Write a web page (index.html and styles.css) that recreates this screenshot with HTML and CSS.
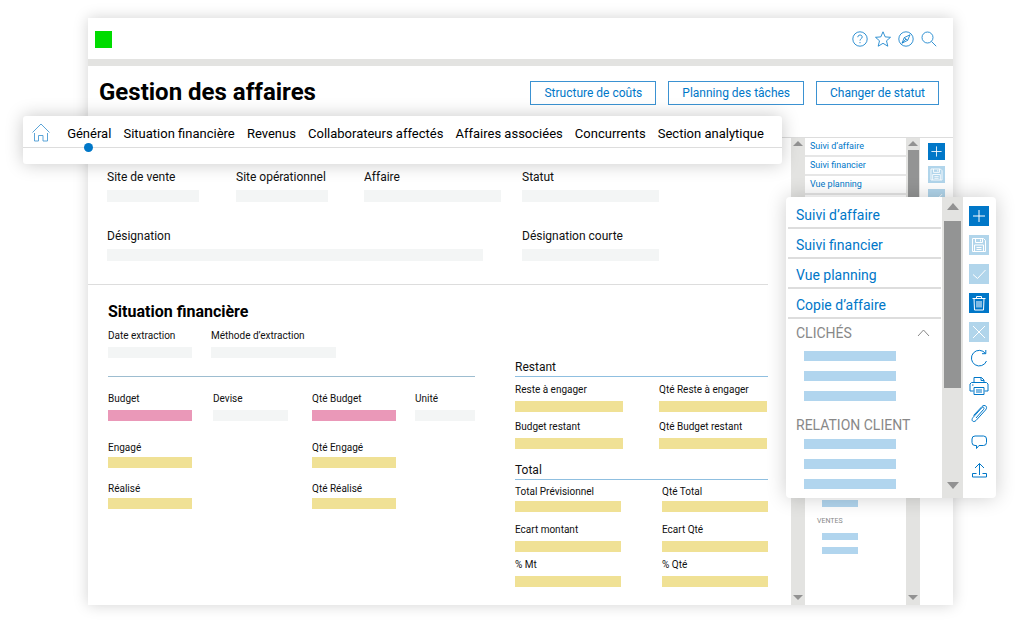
FILE: index.html
```html
<!DOCTYPE html>
<html lang="fr">
<head>
<meta charset="utf-8">
<title>Gestion des affaires</title>
<meta name="viewport" content="width=device-width, initial-scale=1">
<link rel="stylesheet" href="styles.css">
</head>
<body>
<svg class="defs" width="0" height="0" aria-hidden="true">
  <symbol id="i-plus" viewBox="0 0 20 20"><path d="M10 4v12M4 10h12"/></symbol>
  <symbol id="i-save" viewBox="0 0 20 20"><path d="M3.500 3.500h11l2 2v11h-13zM6.500 3.500v4h7v-4M11.500 4.500v2M5.500 16.500v-6.500h9v6.500M7.500 12.500h5M7.500 14.500h5"/></symbol>
  <symbol id="i-check" viewBox="0 0 20 20"><path d="M4 10.500l4.500 4L16.500 6"/></symbol>
  <symbol id="i-trash" viewBox="0 0 20 20"><path d="M3.500 5.500h13M7.500 5.500v-2h5v2M5 5.500l.5 11.500h9l.5-11.500M8 8v6.500M10 8v6.500M12 8v6.500"/></symbol>
  <symbol id="i-cross" viewBox="0 0 20 20"><path d="M4 4l12 12M16 4L4 16"/></symbol>
  <symbol id="i-refresh" viewBox="0 0 20 20"><path d="M16.500 5.500A7.800 7.800 0 1 0 17.500 13M16.800 2v3.700h-3.800"/></symbol>
  <symbol id="i-print" viewBox="0 0 20 20"><path d="M5 6.500v-5h7.500l2.500 2.500v2.500M12 1.500v3h3M4.500 15h-3.500v-7l1.500-1.500h15l1.500 1.500v7h-3.500M3 9h1.500M5 11.500h10v7h-10zM7 14h6M7 16h6"/></symbol>
  <symbol id="i-clip" viewBox="0 0 20 20"><path d="M7 14l7.500-8.500c1.500-2-.5-3-2-1.500L4 13.500c-2.500 3 .5 5.500 3 3l9.500-10.500c3-3.500-1-6-3.500-3.500L4.500 11.500"/></symbol>
  <symbol id="i-chat" viewBox="0 0 20 20"><path d="M6 4h8.500a3 3 0 0 1 3 3v3.500a3 3 0 0 1-3 3H10L7.500 16.500v-3H6a3 3 0 0 1-3-3V7a3 3 0 0 1 3-3z"/></symbol>
  <symbol id="i-up" viewBox="0 0 20 20"><path d="M10.500 15V3.500M6 8l4.500-4.500L15 8M7.500 13.500h-4v3.500h14v-3.500h-4"/></symbol>
</svg>

<div class="stage">
  <main class="window">
    <header class="topbar">
      <span class="logo"></span>
      <div class="tools">
        <button aria-label="Aide"><svg viewBox="0 0 16 16"><circle cx="8" cy="8" r="7.200"/><path d="M5.800 6.200c0-3 4.400-2.800 4.400-.2 0 1.800-2.200 1.600-2.200 3.600M8 11v1.200"/></svg></button>
        <button aria-label="Favoris"><svg viewBox="0 0 16 16"><path d="M8 .800l2.200 5.100 5.300.4-4 3.500 1.300 5.400L8 12.300l-4.800 2.900 1.300-5.400-4-3.500 5.300-.4z"/></svg></button>
        <button aria-label="Explorer"><svg viewBox="0 0 16 16"><circle cx="8" cy="8" r="7.200"/><path d="M12 3.800L9.700 9.300 4 12.200l2.200-5.500zM6.200 6.700l3.500 2.600M4 12.200l4-4.200"/></svg></button>
        <button aria-label="Rechercher"><svg viewBox="0 0 16 16"><circle cx="6.500" cy="6.500" r="5.500"/><path d="M10.500 10.500l4.700 4.700"/></svg></button>
      </div>
    </header>

    <div class="heading">
      <h1>Gestion des affaires</h1>
      <div class="actions">
        <button class="action">Structure de coûts</button>
        <button class="action">Planning des tâches</button>
        <button class="action">Changer de statut</button>
      </div>
    </div>

    <div class="body">
      <form class="content">
        <section class="general">
          <div class="row row-four">
            <div class="field"><label for="site-vente">Site de vente</label><input id="site-vente"></div>
            <div class="field"><label for="site-op">Site opérationnel</label><input id="site-op"></div>
            <div class="field wide"><label for="affaire">Affaire</label><input id="affaire"></div>
            <div class="field wide"><label for="statut">Statut</label><input id="statut"></div>
          </div>
          <div class="row row-two">
            <div class="field full"><label for="designation">Désignation</label><input id="designation"></div>
            <div class="field wide"><label for="designation-courte">Désignation courte</label><input id="designation-courte"></div>
          </div>
        </section>

        <section class="finance">
          <div class="left">
            <h2>Situation financière</h2>
            <div class="row extraction">
              <div class="field"><label for="date-ext">Date extraction</label><input id="date-ext"></div>
              <div class="field wide"><label for="methode">Méthode d’extraction</label><input id="methode"></div>
            </div>
            <div class="row amounts">
              <div class="field pink"><label for="budget">Budget</label><input id="budget"></div>
              <div class="field small"><label for="devise">Devise</label><input id="devise"></div>
              <div class="field pink"><label for="qte-budget">Qté Budget</label><input id="qte-budget"></div>
              <div class="field full"><label for="unite">Unité</label><input id="unite"></div>
            </div>
            <div class="row pairs">
              <div class="field yellow tight"><label for="engage">Engagé</label><input id="engage"></div>
              <div class="field yellow tight"><label for="qte-engage">Qté Engagé</label><input id="qte-engage"></div>
              <div class="field yellow tight"><label for="realise">Réalisé</label><input id="realise"></div>
              <div class="field yellow tight"><label for="qte-realise">Qté Réalisé</label><input id="qte-realise"></div>
            </div>
          </div>
          <div class="right">
            <h3>Restant</h3>
            <div class="row sums">
              <div class="field yellow"><label for="reste">Reste à engager</label><input id="reste"></div>
              <div class="field yellow"><label for="qte-reste">Qté Reste à engager</label><input id="qte-reste"></div>
              <div class="field yellow"><label for="budget-restant">Budget restant</label><input id="budget-restant"></div>
              <div class="field yellow"><label for="qte-budget-restant">Qté Budget restant</label><input id="qte-budget-restant"></div>
            </div>
            <h3>Total</h3>
            <div class="row sums totals">
              <div class="field yellow tight"><label for="total-prev">Total Prévisionnel</label><input id="total-prev"></div>
              <div class="field yellow tight"><label for="qte-total">Qté Total</label><input id="qte-total"></div>
              <div class="field yellow"><label for="ecart">Ecart montant</label><input id="ecart"></div>
              <div class="field yellow"><label for="ecart-qte">Ecart Qté</label><input id="ecart-qte"></div>
              <div class="field yellow"><label for="pct-mt">% Mt</label><input id="pct-mt"></div>
              <div class="field yellow"><label for="pct-qte">% Qté</label><input id="pct-qte"></div>
            </div>
          </div>
        </section>
      </form>

      <div class="scroll"><span class="arrow up"></span><span class="arrow down"></span></div>
      <aside class="side">
        <nav class="side-links">
          <a href="#">Suivi d’affaire</a>
          <a href="#">Suivi financier</a>
          <a href="#">Vue planning</a>
        </nav>
        <div class="side-group">
          <span class="bar"></span>
          <h4>VENTES</h4>
          <span class="bar"></span>
          <span class="bar"></span>
        </div>
      </aside>
      <div class="scroll"><span class="arrow up"></span><span class="thumb"></span><span class="arrow down"></span></div>
      <div class="side-icons">
        <button class="tile solid" aria-label="Ajouter"><svg><use href="#i-plus"/></svg></button>
        <button class="tile pale" aria-label="Enregistrer"><svg><use href="#i-save"/></svg></button>
        <button class="tile pale" aria-label="Valider"><svg><use href="#i-check"/></svg></button>
      </div>
    </div>
  </main>

  <nav class="tabs">
    <a class="home" href="#" aria-label="Accueil"><svg viewBox="0 0 18 19"><path d="M.500 9.500L9 1l8.500 8.500M2.500 10v8h4v-5.500h4.500V18h4.500v-8"/></svg></a>
    <a class="current" href="#">Général</a>
    <a href="#">Situation financière</a>
    <a href="#">Revenus</a>
    <a href="#">Collaborateurs affectés</a>
    <a href="#">Affaires associées</a>
    <a href="#">Concurrents</a>
    <a href="#">Section analytique</a>
  </nav>

  <aside class="panel">
    <div class="panel-list">
      <nav class="panel-links">
        <a href="#">Suivi d’affaire</a>
        <a href="#">Suivi financier</a>
        <a href="#">Vue planning</a>
        <a href="#">Copie d’affaire</a>
      </nav>
      <h4>CLICHÉS <svg viewBox="0 0 12 8"><path d="M.500 7L6 1l5.500 6"/></svg></h4>
      <div class="bars"><span class="bar"></span><span class="bar"></span><span class="bar"></span></div>
      <h4>RELATION CLIENT</h4>
      <div class="bars"><span class="bar"></span><span class="bar"></span><span class="bar"></span></div>
    </div>
    <div class="scroll big"><span class="arrow up"></span><span class="thumb"></span><span class="arrow down"></span></div>
    <div class="panel-icons">
      <div class="tiles">
        <button class="tile solid" aria-label="Ajouter"><svg><use href="#i-plus"/></svg></button>
        <button class="tile pale" aria-label="Enregistrer"><svg><use href="#i-save"/></svg></button>
        <button class="tile pale" aria-label="Valider"><svg><use href="#i-check"/></svg></button>
        <button class="tile solid" aria-label="Supprimer"><svg><use href="#i-trash"/></svg></button>
        <button class="tile pale" aria-label="Annuler"><svg><use href="#i-cross"/></svg></button>
      </div>
      <div class="outlines">
        <button class="tile" aria-label="Actualiser"><svg><use href="#i-refresh"/></svg></button>
        <button class="tile" aria-label="Imprimer"><svg><use href="#i-print"/></svg></button>
        <button class="tile" aria-label="Pièces jointes"><svg><use href="#i-clip"/></svg></button>
        <button class="tile" aria-label="Commentaires"><svg><use href="#i-chat"/></svg></button>
        <button class="tile" aria-label="Exporter"><svg><use href="#i-up"/></svg></button>
      </div>
    </div>
  </aside>
</div>
</body>
</html>
```
FILE: styles.css
```css
* { box-sizing: border-box; }

:root {
  --blue: #0077c8;
  --pale: #b1d5eb;
  --field: #f3f5f5;
  --yellow: #f0e195;
  --pink: #ea98b8;
  --rail: #e3e3e1;
}

body {
  margin: 0;
  background: #fff;
  color: #111;
  font-family: Roboto, "Liberation Sans", sans-serif;
}

h1, h2, h3, h4 { margin: 0; }
a { color: inherit; text-decoration: none; }
button { font: inherit; color: inherit; margin: 0; padding: 0; border: 0; background: none; cursor: pointer; }
svg { display: block; fill: none; stroke: currentColor; }
.defs { position: absolute; }

.stage { position: relative; padding: 18px 71px 18px 88px; }

.window {
  display: flex;
  flex-direction: column;
  background: #fff;
  box-shadow: 0 0 14px rgba(0, 0, 0, .18);
}

.topbar {
  display: flex;
  align-items: center;
  justify-content: space-between;
  height: 48px;
  padding: 1px 16px 0 7px;
  border-bottom: 7px solid var(--rail);
}
.logo { width: 17px; height: 17px; background: #00dc00; }
.tools { display: flex; gap: 7px; color: var(--blue); }
.tools svg { width: 16px; height: 16px; stroke-width: .8; }

.heading {
  display: flex;
  align-items: flex-start;
  justify-content: space-between;
  height: 72px;
  padding: 12px 14px 0 11px;
  border-bottom: 1px solid #ddd;
}
h1 { font-size: 24px; line-height: 28px; font-weight: 700; color: #000; }
.actions { display: flex; gap: 12px; padding-top: 3px; }
.action {
  height: 24px;
  padding: 0 13px;
  border: 1px solid #3b92d2;
  color: var(--blue);
  font-size: 12px;
  line-height: 22px;
}

.body { display: flex; }
.content { flex: 1; min-width: 0; padding-bottom: 18px; }

.general {
  display: grid;
  gap: 26px;
  margin-right: 23px;
  padding: 31px 0 23px 19px;
  border-bottom: 1px solid #ddd;
}
.row { display: grid; }
.row-four { grid-template-columns: 129fr 128fr 158fr 246fr; }
.row-two { grid-template-columns: 415fr 246fr; }

.field { display: flex; flex-direction: column; align-items: flex-start; gap: 4px; }
.field label { font-size: 10px; line-height: 14px; white-space: nowrap; }
.field input {
  width: 84px;
  height: 11px;
  padding: 0 4px;
  border: 0;
  background: var(--field);
  font: inherit;
  font-size: 9px;
}
.general .field { gap: 5px; }
.general label { font-size: 12px; line-height: 16px; }
.general input { width: 92px; height: 12px; }
.general .wide input { width: 137px; }
.general .full input { width: 376px; }
.field.tight { gap: 2px; }
.field.pink input { background: var(--pink); }
.field.yellow input { background: var(--yellow); }

.finance {
  display: grid;
  grid-template-columns: 367fr 253fr;
  gap: 40px;
  padding: 0 23px 0 20px;
}
h2 { padding-top: 15px; font-size: 16px; line-height: 24px; font-weight: 700; color: #000; }
.extraction {
  grid-template-columns: 103fr 264fr;
  padding: 5px 0 18px;
  border-bottom: 1px solid #9dbdd0;
}
.extraction .wide input { width: 125px; }
.amounts { grid-template-columns: 105fr 99fr 103fr 60fr; padding-top: 15px; }
.amounts .small input { width: 75px; }
.amounts .full input { width: 100%; }
.pairs { grid-template-columns: 204fr 163fr; gap: 14px 0; padding-top: 20px; }

.right { padding-top: 74px; }
h3 {
  height: 18px;
  border-bottom: 1px solid #8fbfe0;
  font-size: 12px;
  line-height: 16px;
  font-weight: 400;
}
.sums { grid-template-columns: 144fr 109fr; gap: 8px 0; padding: 6px 0 13px; }
.sums input { width: 108px; }
.totals { grid-template-columns: 147fr 106fr; gap: 11px 0; padding: 5px 0 0; }
.totals .field:nth-child(n+5) { margin-top: -5px; }
.totals input { width: 106px; }

.scroll {
  display: flex;
  flex-direction: column;
  align-items: center;
  width: 14px;
  padding: 3px 0 5px;
  background: var(--rail);
}
.arrow { border: 5px solid transparent; }
.arrow.up { border-top: 0; border-bottom-color: #929292; }
.arrow.down { margin-top: auto; border-bottom: 0; border-top-color: #929292; }
.thumb { width: 11px; height: 120px; margin-top: 4px; background: #939494; }

.bar { display: block; height: 7px; background: #b1d5ee; }

.side { display: flex; flex-direction: column; justify-content: space-between; width: 101px; padding-bottom: 51px; }
.side-links a {
  display: block;
  height: 19px;
  padding-left: 5px;
  border-bottom: 2px solid #e6e6e6;
  color: var(--blue);
  font-size: 9px;
  line-height: 16px;
}
.side-group { padding: 0 12px; }
.side-group .bar { width: 36px; margin: 7px 0 0 5px; }
.side-group h4 { padding-top: 9px; font-size: 7px; line-height: 10px; font-weight: 400; color: #888; }

.side-icons { display: flex; flex-direction: column; align-items: center; gap: 6px; width: 33px; padding-top: 5px; }
.tile { width: 20px; height: 20px; color: var(--blue); }
.tile svg { width: 100%; height: 100%; }
.side-icons .tile { width: 17px; height: 17px; }
.tile.solid { background: var(--blue); color: #fff; }
.tile.pale { background: var(--pale); color: #fff; }

.tabs {
  position: absolute;
  top: 116px;
  left: 23px;
  right: 242px;
  display: flex;
  justify-content: space-between;
  height: 48px;
  padding: 0 18px 0 9px;
  border-radius: 3px;
  background: linear-gradient(#ddd, #ddd) 0 31px / 100% 1px no-repeat #fff;
  box-shadow: 0 0 18px rgba(0, 0, 0, .22);
  color: #000;
  font-size: 13px;
  line-height: 36px;
  white-space: nowrap;
}
.home { padding: 7px 5px 0 0; color: #4a9bd4; }
.home svg { width: 18px; height: 19px; stroke-width: .9; }
.current { position: relative; }
.current::after {
  content: "";
  position: absolute;
  top: 27px;
  left: 50%;
  width: 9px;
  height: 9px;
  margin-left: -5px;
  border-radius: 50%;
  background: var(--blue);
}

.panel {
  position: absolute;
  top: 197px;
  right: 28px;
  display: flex;
  width: 210px;
  border-radius: 4px;
  background: #fff;
  box-shadow: 0 0 20px rgba(0, 0, 0, .2);
}
.panel-list { flex: 1; padding: 2px 1px 9px 2px; }
.panel-links a {
  display: block;
  height: 30px;
  padding-left: 8px;
  border-bottom: 2px solid #ddd;
  color: var(--blue);
  font-size: 14px;
  line-height: 32px;
}
.panel h4 {
  display: flex;
  align-items: center;
  justify-content: space-between;
  height: 27px;
  padding: 0 11px 0 8px;
  font-size: 14px;
  font-weight: 400;
  color: #888;
}
.panel h4 svg { width: 13px; height: 8px; }
.bars { display: grid; gap: 10px; padding: 5px 0 10px 16px; }
.bars .bar { width: 92px; height: 10px; }
.bars:last-child { padding: 1px 0 0 16px; }
.scroll.big { width: 21px; padding: 6px 0 9px; }
.big .arrow { border-width: 6px; }
.big .arrow.up { border-top: 0; border-bottom-width: 7px; }
.big .arrow.down { border-bottom: 0; border-top-width: 7px; }
.big .thumb { width: 17px; height: 167px; margin-top: 11px; }
.panel-icons { display: flex; flex-direction: column; align-items: center; gap: 6px; width: 33px; padding: 9px 1px 0 0; }
.tiles { display: grid; gap: 9px; }
.outlines { display: grid; gap: 8px; }
```
